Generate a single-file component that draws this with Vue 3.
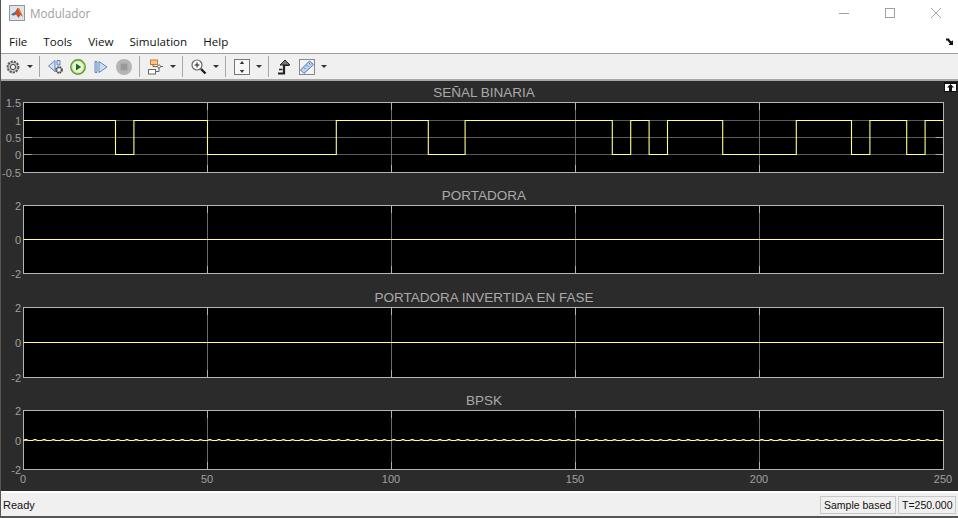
<template>
  <div class="window">
    <div class="titlebar">
      <svg class="logo" width="16" height="16" viewBox="0 0 16 16">
        <rect x="0.5" y="0.5" width="15" height="15" fill="#dfe4ec" stroke="#8c96a4" />
        <path d="M2 9.5 L6 7 L8.5 3 L10 3 L14 12 L11.5 10 L9.5 13 L7 9.5 L4.5 10.5 Z" fill="#c9502a" />
        <path d="M2 9.5 L6 7 L7 9.5 L4.5 10.5 Z" fill="#3f78b5" />
        <path d="M8.5 3 L10 3 L14 12 L11 8 Z" fill="#e8862f" />
      </svg>
      <span class="title">Modulador</span>
      <div class="win-buttons">
        <svg width="12" height="12" viewBox="0 0 12 12"><path d="M1 6.5H11" stroke="#a0a0a0" /></svg>
        <svg width="12" height="12" viewBox="0 0 12 12"><rect x="1.5" y="1.5" width="9" height="9" fill="none" stroke="#a0a0a0" /></svg>
        <svg width="12" height="12" viewBox="0 0 12 12"><path d="M1 1L11 11M11 1L1 11" stroke="#a8a8a8" /></svg>
      </div>
    </div>

    <div class="menubar">
      <span v-for="item in menus" :key="item" class="menu-item">{{ item }}</span>
      <svg class="dock" width="9" height="9" viewBox="0 0 9 9">
        <path d="M0 1.5H3L4 3.5L6 4.5L7 3V8H2.5L4 6.5L2.5 5L1.5 3.5H0Z" fill="#111" />
      </svg>
    </div>

    <div class="toolbar">
      <!-- settings -->
      <svg class="tool" width="18" height="18" viewBox="0 0 18 18">
        <circle cx="9" cy="9" r="5.4" fill="#c4c4c4" stroke="#5d5d5d" stroke-width="2" stroke-dasharray="2.2 1" />
        <circle cx="9" cy="9" r="2.6" fill="#f2f2f2" stroke="#444" />
      </svg>
      <span class="caret"></span>
      <span class="sep"></span>

      <!-- step back -->
      <svg class="tool" width="18" height="18" viewBox="0 0 18 18">
        <path d="M1.5 8L8 2.5V13.5Z" fill="#cfe0f4" stroke="#5f86b8" />
        <path d="M10 2.5H13V7H10Z" fill="#cfe0f4" stroke="#5f86b8" />
        <circle cx="12" cy="12" r="3" fill="#bbb" stroke="#444" stroke-width="1.6" stroke-dasharray="1.6 .8" />
        <circle cx="12" cy="12" r="1.2" fill="#fff" />
      </svg>
      <!-- run -->
      <svg class="tool" width="18" height="18" viewBox="0 0 18 18">
        <circle cx="9" cy="9" r="7.2" fill="#cde8a8" stroke="#5f9a2e" stroke-width="1.4" />
        <circle cx="9" cy="9" r="5.2" fill="#eaf6d8" />
        <path d="M7 5.6L12.2 9L7 12.4Z" fill="#1f6a24" />
      </svg>
      <!-- step forward -->
      <svg class="tool nudge" width="18" height="18" viewBox="0 0 18 18">
        <path d="M3 3.5V14.5H5V3.5Z" fill="#cfe0f4" stroke="#5f86b8" />
        <path d="M7 3.5V14.5L15 9Z" fill="#cfe0f4" stroke="#5f86b8" />
      </svg>
      <!-- stop -->
      <svg class="tool nudge" width="18" height="18" viewBox="0 0 18 18">
        <circle cx="9" cy="9" r="8" fill="#b4b4b4" />
        <rect x="5.6" y="5.6" width="6.8" height="6.8" fill="#999" />
      </svg>
      <span class="sep"></span>

      <!-- signal hierarchy -->
      <svg class="tool" width="18" height="18" viewBox="0 0 18 18">
        <rect x="3.5" y="2" width="7" height="4.5" fill="#f7c987" stroke="#d9761f" />
        <rect x="1.5" y="11.5" width="7" height="4.5" fill="#fff" stroke="#666" />
        <path d="M6 6.5V8.5H10.5M13.5 8.5H16M8.5 13.5H12V10" fill="none" stroke="#666" />
        <circle cx="12" cy="8.5" r="1.5" fill="#fff" stroke="#666" />
      </svg>
      <span class="caret"></span>
      <span class="sep"></span>

      <!-- zoom -->
      <svg class="tool" width="18" height="18" viewBox="0 0 18 18">
        <circle cx="7" cy="7" r="5" fill="#fff" stroke="#666" stroke-width="1.2" />
        <path d="M4.6 7H9.4M7 4.6V9.4" stroke="#222" stroke-width="1.1" />
        <path d="M11 11L15.5 15.5" stroke="#222" stroke-width="2.4" />
      </svg>
      <span class="caret"></span>
      <span class="sep"></span>

      <!-- autoscale -->
      <svg class="tool" width="18" height="18" viewBox="0 0 18 18">
        <rect x="1.5" y="1.5" width="15" height="15" fill="#f8f8f8" stroke="#777" />
        <path d="M9 3L11.2 6H6.8ZM9 15L6.8 12H11.2Z" fill="#333" />
      </svg>
      <span class="caret"></span>
      <span class="sep"></span>

      <!-- triggers -->
      <svg class="tool" width="18" height="18" viewBox="0 0 18 18">
        <path d="M2 15.5H8V7H13" fill="none" stroke="#222" stroke-width="2.2" />
        <path d="M4 7L9 2L14 7Z" fill="#777" stroke="#222" />
        <path d="M3 11.5H6.5" stroke="#222" stroke-width="1.5" />
      </svg>
      <!-- measure -->
      <svg class="tool" width="18" height="18" viewBox="0 0 18 18">
        <rect x="1.5" y="1.5" width="15" height="15" fill="#f4f4f4" stroke="#888" />
        <path d="M2.5 12L11.5 3L15.5 6.5L6 15.5Z" fill="#b9d5ee" stroke="#4f7ba8" />
        <path d="M6 9.5L7.5 11M8.5 7L10 8.5M11 5L12.5 6.5" stroke="#4f7ba8" />
      </svg>
      <span class="caret"></span>
    </div>

    <div class="scope">
      <span class="undock">
        <svg width="11" height="8" viewBox="0 0 11 8"><path d="M5.5 1L9 4.5H7V8H4V4.5H2Z" fill="#111" /><path d="M0 .5H11" stroke="#111" /></svg>
      </span>

      <section v-for="plot in plots" :key="plot.title" class="plot" :style="{ marginBottom: plot.gap + 'px' }">
        <h3 class="plot-title">{{ plot.title }}</h3>
        <svg class="axes" width="958" :height="plot.height" :viewBox="`0 0 958 ${plot.height}`">
          <rect :x="left" y="0.5" :width="width" :height="plot.height - 1" fill="#000" />

          <g v-for="tick in plot.yTicks" :key="tick.label">
            <text x="21" :y="tick.y + 4" text-anchor="end" class="tick-label">{{ tick.label }}</text>
            <template v-if="tick.grid">
              <line :x1="left" :x2="left + width" :y1="tick.y" :y2="tick.y" stroke="#5a5a5a" />
              <line :x1="left" :x2="left + 8" :y1="tick.y" :y2="tick.y" stroke="#aaa" />
              <line :x1="left + width - 8" :x2="left + width" :y1="tick.y" :y2="tick.y" stroke="#aaa" />
            </template>
          </g>

          <g v-for="x in gridX" :key="x">
            <line :x1="x" :x2="x" y1="0" :y2="plot.height" stroke="#6a6a6a" />
            <line :x1="x" :x2="x" y1="0" y2="8" stroke="#b4b4b4" />
            <line :x1="x" :x2="x" :y1="plot.height - 8" :y2="plot.height" stroke="#b4b4b4" />
          </g>

          <rect :x="left" y="0.5" :width="width" :height="plot.height - 1" fill="none" stroke="#b4b4b4" />
          <polyline :points="plot.points" fill="none" stroke="#ffff8a" stroke-width="1.1" />
        </svg>
      </section>

      <div class="x-axis">
        <span v-for="n in xLabels" :key="n" class="x-label">{{ n }}</span>
      </div>
    </div>

    <div class="statusbar">
      <span class="ready">Ready</span>
      <span class="status-box sample">Sample based</span>
      <span class="status-box time">T=250.000</span>
    </div>
  </div>
</template>

<script setup>
const menus = ['File', 'Tools', 'View', 'Simulation', 'Help']
const left = 23.5
const width = 920
const pxPerUnit = width / 250

const xLabels = [0, 50, 100, 150, 200, 250]
const gridX = [50, 100, 150, 200].map((t) => left + t * pxPerUnit)

// times where the binary signal toggles, starts high
const edges = [25, 30, 50, 85, 110, 120, 160, 165, 170, 175, 190, 210, 225, 230, 240, 245]

function binaryPoints(zero, one) {
  let level = true
  const pts = [`${left},${one}`]
  edges.forEach((t) => {
    const x = left + t * pxPerUnit
    pts.push(`${x},${level ? one : zero}`)
    level = !level
    pts.push(`${x},${level ? one : zero}`)
  })
  pts.push(`${left + width},${level ? one : zero}`)
  return pts.join(' ')
}

function flatPoints(y) {
  return `${left},${y} ${left + width},${y}`
}

function bpskPoints(y) {
  const pts = []
  for (let x = 0; x <= width; x += 1) {
    const ripple = Math.max(0, Math.sin((x / 9.2) * Math.PI * 2))
    pts.push(`${left + x},${y - ripple}`)
  }
  return pts.join(' ')
}

const tick = (label, y, grid = true) => ({ label, y: y + 0.5, grid })

const plots = [
  {
    title: 'SEÑAL BINARIA',
    height: 71,
    gap: 11,
    yTicks: [tick('1.5', 0, false), tick('1', 18), tick('0.5', 35), tick('0', 52), tick('-0.5', 70, false)],
    points: binaryPoints(52.5, 18.5),
  },
  {
    title: 'PORTADORA',
    height: 69,
    gap: 12,
    yTicks: [tick('2', 0, false), tick('0', 34), tick('-2', 68, false)],
    points: flatPoints(34.5),
  },
  {
    title: 'PORTADORA INVERTIDA EN FASE',
    height: 71,
    gap: 11,
    yTicks: [tick('2', 0, false), tick('0', 35), tick('-2', 70, false)],
    points: flatPoints(35.5),
  },
  {
    title: 'BPSK',
    height: 60,
    gap: 0,
    yTicks: [tick('2', 0, false), tick('0', 30), tick('-2', 59, false)],
    points: bpskPoints(30.5),
  },
]
</script>

<style>
html, body {
  margin: 0;
  background: #fff;
  overflow: hidden;
}
</style>

<style scoped>
.window {
  position: relative;
  width: 958px;
  height: 518px;
  display: flex;
  flex-direction: column;
  font-family: "Open Sans", "Noto Sans", sans-serif;
  color: #111;
  background: #fff;
  overflow: hidden;
}

/* dark edge of the window frame */
.window::after {
  content: "";
  position: absolute;
  top: 0;
  bottom: 0;
  left: 0;
  width: 1px;
  background: #555;
}

.titlebar {
  height: 30px;
  flex: none;
  display: flex;
  align-items: center;
  padding: 0 0 5px 9px;
  box-sizing: border-box;
}

.title {
  margin-left: 5px;
  font-size: 11.7px;
  color: #a0a0a0;
}

.win-buttons {
  margin-left: auto;
  display: flex;
  gap: 34px;
  padding-right: 16px;
}

.menubar {
  height: 23px;
  flex: none;
  display: flex;
  align-items: center;
  padding: 0 0 0 9px;
  gap: 16px;
  font-size: 11.6px;
  border-bottom: 1px solid #a0a0a0;
}

.dock {
  margin-left: auto;
  margin-right: 3px;
}

.toolbar {
  height: 25px;
  flex: none;
  display: flex;
  align-items: center;
  padding-left: 2px;
  background: #f0f0f0;
  border-bottom: 2px solid #a8a8a8;
}

.tool {
  flex: none;
  margin: 0 2px;
}

.tool.nudge {
  margin-left: 3px;
}

.caret {
  flex: none;
  width: 0;
  height: 0;
  margin: 0 2px 0 3px;
  border-left: 3px solid transparent;
  border-right: 3px solid transparent;
  border-top: 3px solid #333;
}

.sep {
  flex: none;
  width: 1px;
  height: 21px;
  margin: 0 5px 0 4px;
  background: #a8a8a8;
}

.scope {
  position: relative;
  flex: 1;
  min-height: 0;
  display: flex;
  flex-direction: column;
  background: #2b2b2b;
}

.undock {
  position: absolute;
  top: 1px;
  right: 1px;
  width: 11px;
  height: 8px;
  display: flex;
  background: #fff;
  border: 1px solid #111;
}

.plot-title {
  margin: 0;
  height: 21px;
  line-height: 24px;
  padding-left: 10px;
  text-align: center;
  font-family: "Liberation Sans", Arial, sans-serif;
  font-size: 13.5px;
  font-weight: 400;
  color: #aaaaaa;
}

.axes {
  display: block;
  overflow: visible;
}

.tick-label {
  font-family: "Liberation Sans", Arial, sans-serif;
  font-size: 11px;
  fill: #a0a0a0;
}

.x-axis {
  flex: 1;
  display: flex;
  justify-content: space-between;
  padding: 0 13px 0 21px;
  font-family: "Liberation Sans", Arial, sans-serif;
  font-size: 11px;
  color: #a0a0a0;
  line-height: 18px;
}

.x-label {
  width: 4px;
  display: flex;
  justify-content: center;
  white-space: nowrap;
}

.statusbar {
  height: 23px;
  flex: none;
  display: flex;
  align-items: center;
  padding-left: 3px;
  background: #f0f0f0;
  border-top: 2px solid #fff;
  border-bottom: 2px solid #555;
  font-family: "Liberation Sans", Arial, sans-serif;
  font-size: 11px;
}

.ready {
  margin-right: auto;
}

.status-box {
  box-sizing: border-box;
  height: 18px;
  line-height: 16px;
  padding-left: 3px;
  margin-left: 2px;
  border: 1px solid #c8c8c8;
  font-size: 10.5px;
  white-space: nowrap;
}

.sample {
  width: 76px;
}

.time {
  width: 58px;
  margin-right: 2px;
}
</style>
